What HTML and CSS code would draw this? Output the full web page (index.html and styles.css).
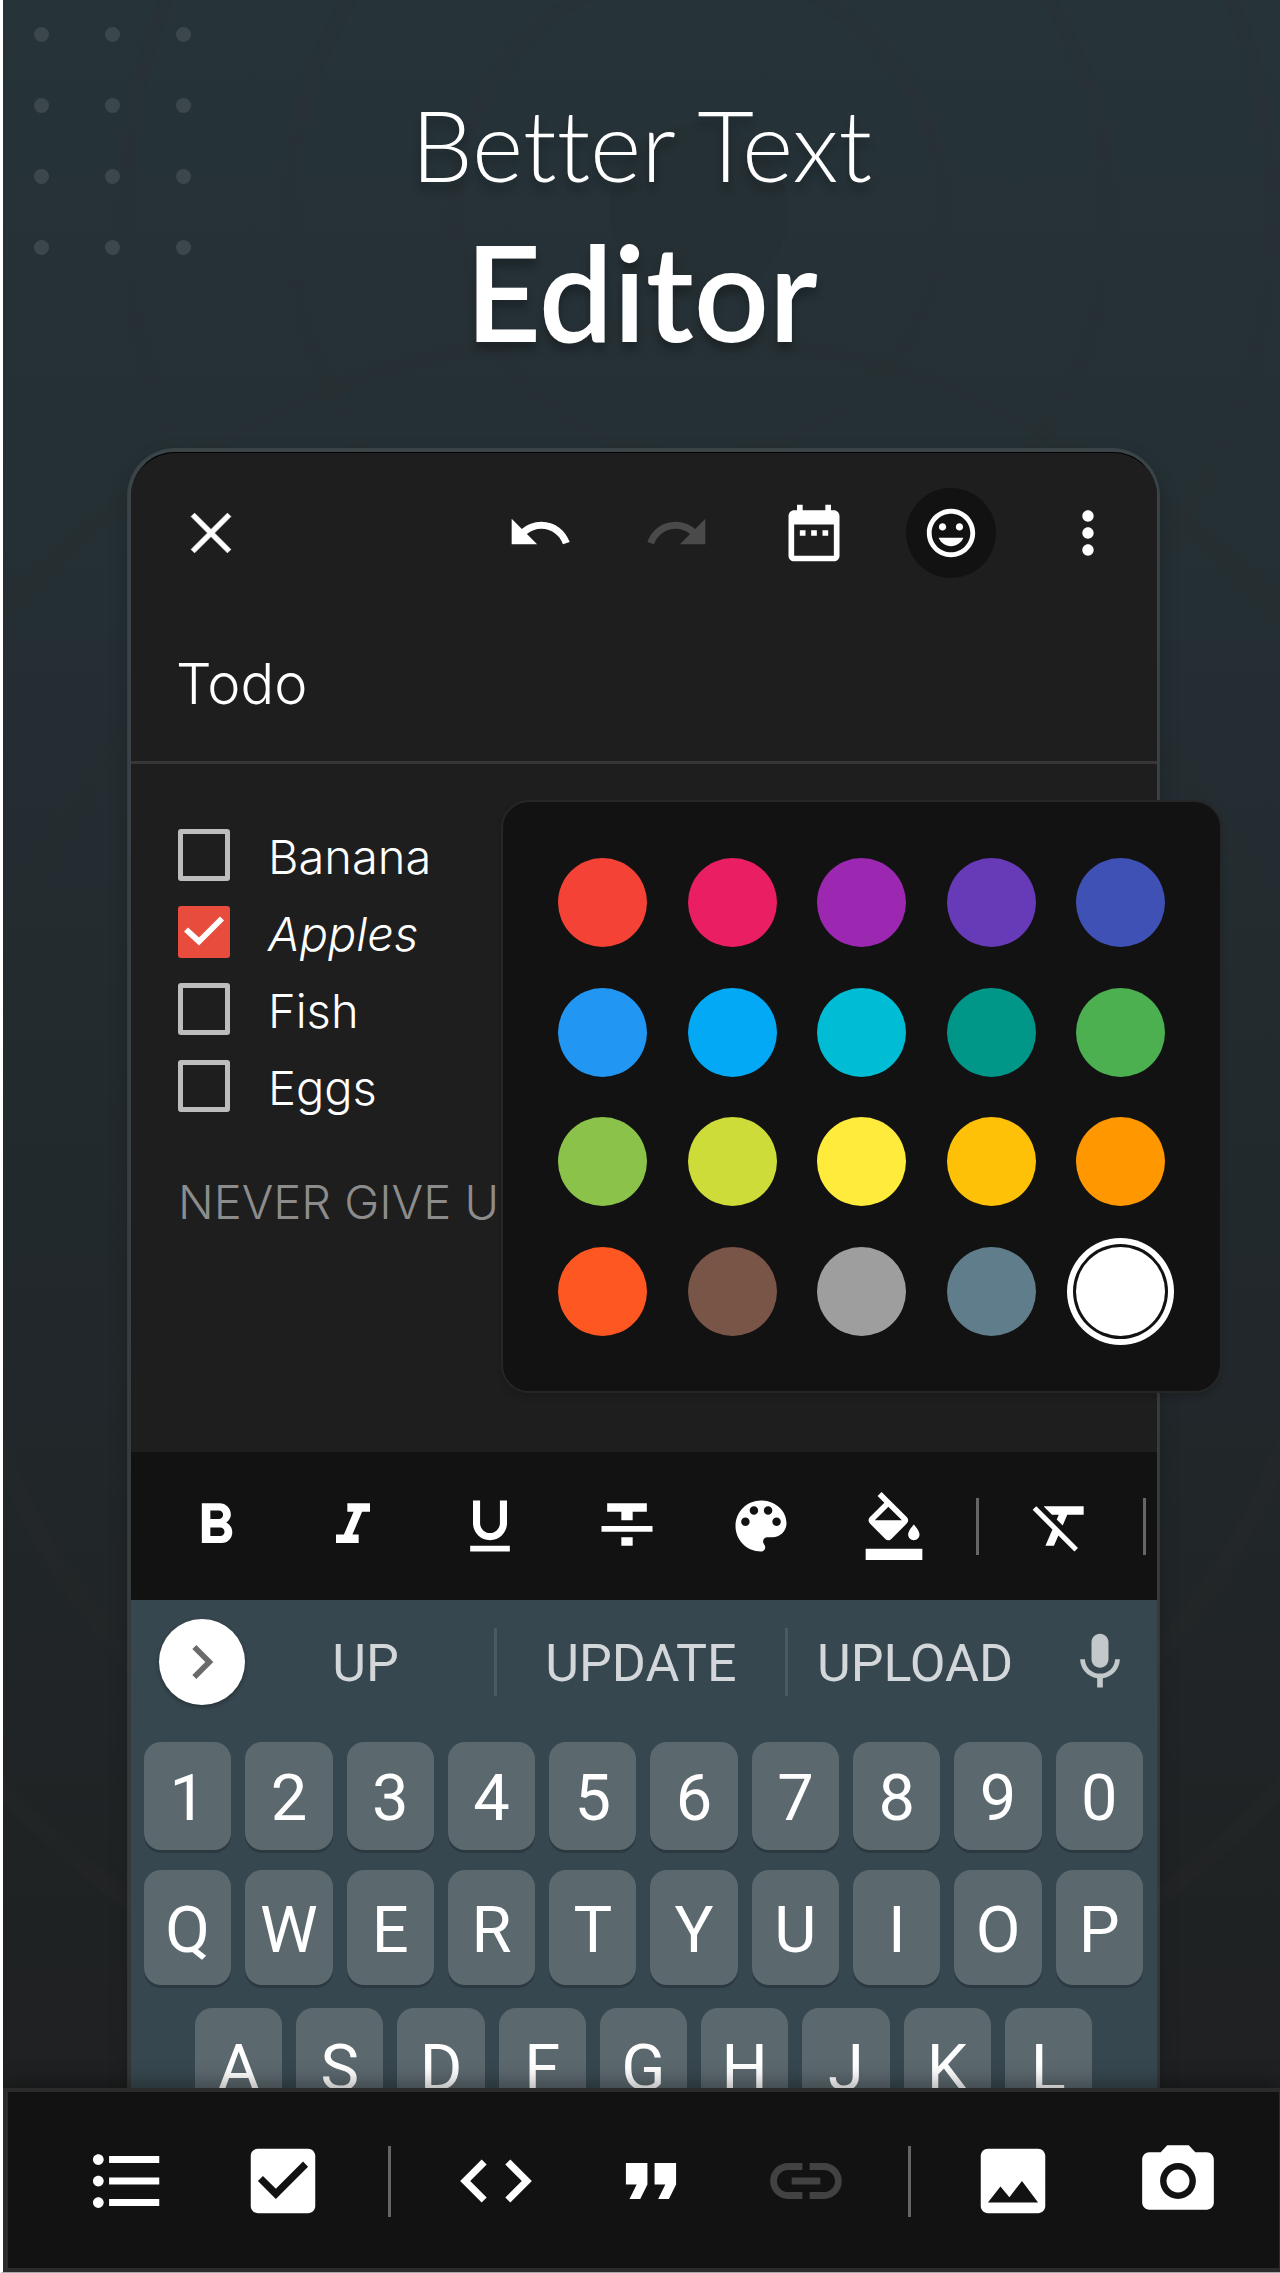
FILE: index.html
```html
<!DOCTYPE html>
<html lang="en">
<head>
<meta charset="utf-8">
<meta name="viewport" content="width=device-width, initial-scale=1">
<title>Better Text Editor</title>
<link rel="stylesheet" href="styles.css">
</head>
<body>
<main class="page">
  <div class="dots" aria-hidden="true">
    <i></i><i></i><i></i><i></i><i></i><i></i><i></i><i></i><i></i><i></i><i></i><i></i>
  </div>

  <h1 class="headline">
    <span class="headline-light">Better Text</span>
    <span class="headline-bold">Editor</span>
  </h1>

  <section class="phone">
    <header class="appbar">
      <button class="icon-btn" aria-label="Close"><svg viewBox="0 0 24 24"><path d="M19 6.200 17.800 5 12 10.800 6.200 5 5 6.200 10.800 12 5 17.800 6.200 19 12 13.200 17.800 19 19 17.800 13.200 12z" stroke="currentColor" stroke-width=".3"/></svg></button>
      <div class="appbar-actions">
        <button class="icon-btn" aria-label="Undo"><svg viewBox="0 0 24 24"><path d="M12.500 8c-2.650 0-5.050.99-6.900 2.600L2 7v9h9l-3.620-3.620c1.390-1.160 3.160-1.880 5.120-1.880 3.540 0 6.550 2.310 7.600 5.500l2.370-.78C21.080 11.030 17.150 8 12.500 8z"/></svg></button>
        <button class="icon-btn" aria-label="Redo" disabled><svg viewBox="0 0 24 24"><path d="M18.400 10.600C16.550 8.990 14.150 8 11.500 8c-4.650 0-8.580 3.030-9.960 7.220L3.900 16c1.050-3.190 4.050-5.500 7.600-5.500 1.950 0 3.730.72 5.120 1.880L13 16h9V7l-3.600 3.600z"/></svg></button>
        <button class="icon-btn" aria-label="Reminder"><svg viewBox="0 0 24 24"><path d="M9 11H7v2h2v-2zm4 0h-2v2h2v-2zm4 0h-2v2h2v-2zm2-7h-1V2h-2v2H8V2H6v2H5c-1.110 0-1.990.9-1.990 2L3 20c0 1.100.89 2 2 2h14c1.100 0 2-.9 2-2V6c0-1.100-.9-2-2-2zm0 16H5V9h14v11z"/></svg></button>
        <button class="icon-btn icon-btn-active" aria-label="Emoji"><svg viewBox="0 0 24 24"><path d="M11.990 2C6.470 2 2 6.480 2 12s4.470 10 9.990 10C17.520 22 22 17.520 22 12S17.520 2 11.990 2zM12 20c-4.420 0-8-3.580-8-8s3.580-8 8-8 8 3.580 8 8-3.580 8-8 8zm3.500-9c.83 0 1.500-.67 1.500-1.500S16.330 8 15.500 8 14 8.670 14 9.500s.67 1.500 1.500 1.500zm-7 0c.83 0 1.500-.67 1.500-1.500S9.330 8 8.500 8 7 8.670 7 9.500 7.670 11 8.500 11zm3.500 6.500c2.330 0 4.310-1.460 5.110-3.500H6.890c.8 2.040 2.780 3.500 5.110 3.500z"/></svg></button>
        <button class="icon-btn" aria-label="More"><svg viewBox="0 0 24 24"><path d="M12 8c1.100 0 2-.9 2-2s-.9-2-2-2-2 .9-2 2 .9 2 2 2zm0 2c-1.100 0-2 .9-2 2s.9 2 2 2 2-.9 2-2-.9-2-2-2zm0 6c-1.100 0-2 .9-2 2s.9 2 2 2 2-.9 2-2-.9-2-2-2z"/></svg></button>
      </div>
    </header>

    <div class="title-row"><input class="title-input" type="text" value="Todo" aria-label="Title"></div>

    <div class="note">
      <ul class="checklist">
        <li><input type="checkbox" id="banana"><label for="banana">Banana</label></li>
        <li><input type="checkbox" id="apples" checked><label for="apples"><em>Apples</em></label></li>
        <li><input type="checkbox" id="fish"><label for="fish">Fish</label></li>
        <li><input type="checkbox" id="eggs"><label for="eggs">Eggs</label></li>
      </ul>
      <p class="note-text">NEVER GIVE UP</p>

      <div class="palette" role="radiogroup" aria-label="Text colour">
        <input type="radio" name="color" aria-label="Red" style="--swatch:#f44336">
        <input type="radio" name="color" aria-label="Pink" style="--swatch:#e91e63">
        <input type="radio" name="color" aria-label="Purple" style="--swatch:#9c27b0">
        <input type="radio" name="color" aria-label="Deep purple" style="--swatch:#673ab7">
        <input type="radio" name="color" aria-label="Indigo" style="--swatch:#3f51b5">
        <input type="radio" name="color" aria-label="Blue" style="--swatch:#2196f3">
        <input type="radio" name="color" aria-label="Light blue" style="--swatch:#03a9f4">
        <input type="radio" name="color" aria-label="Cyan" style="--swatch:#00bcd4">
        <input type="radio" name="color" aria-label="Teal" style="--swatch:#009688">
        <input type="radio" name="color" aria-label="Green" style="--swatch:#4caf50">
        <input type="radio" name="color" aria-label="Light green" style="--swatch:#8bc34a">
        <input type="radio" name="color" aria-label="Lime" style="--swatch:#cddc39">
        <input type="radio" name="color" aria-label="Yellow" style="--swatch:#ffeb3b">
        <input type="radio" name="color" aria-label="Amber" style="--swatch:#ffc107">
        <input type="radio" name="color" aria-label="Orange" style="--swatch:#ff9800">
        <input type="radio" name="color" aria-label="Deep orange" style="--swatch:#ff5722">
        <input type="radio" name="color" aria-label="Brown" style="--swatch:#795548">
        <input type="radio" name="color" aria-label="Grey" style="--swatch:#9e9e9e">
        <input type="radio" name="color" aria-label="Blue grey" style="--swatch:#607d8b">
        <input type="radio" name="color" aria-label="White" style="--swatch:#ffffff" checked>
      </div>
    </div>

    <div class="format-bar">
      <div class="format-group">
        <button class="icon-btn" aria-label="Bold"><svg viewBox="0 0 24 24"><path d="M15.600 10.790c.97-.67 1.650-1.770 1.650-2.790 0-2.260-1.750-4-4-4H7v14h7.040c2.090 0 3.710-1.700 3.710-3.790 0-1.520-.86-2.820-2.150-3.420zM10 6.500h3c.83 0 1.500.67 1.500 1.500s-.67 1.500-1.500 1.500h-3v-3zm3.500 9H10v-3h3.500c.83 0 1.500.67 1.500 1.500s-.67 1.500-1.500 1.500z"/></svg></button>
        <button class="icon-btn" aria-label="Italic"><svg viewBox="0 0 24 24"><path d="M10 4v3h2.210l-3.420 8H6v3h8v-3h-2.210l3.420-8H18V4z"/></svg></button>
        <button class="icon-btn" aria-label="Underline"><svg viewBox="0 0 24 24"><path d="M12 17c3.310 0 6-2.690 6-6V3h-2.500v8c0 1.930-1.570 3.500-3.500 3.500S8.500 12.930 8.500 11V3H6v8c0 3.310 2.690 6 6 6zm-7 2v2h14v-2H5z"/></svg></button>
        <button class="icon-btn" aria-label="Strikethrough"><svg viewBox="0 0 24 24"><path d="M10 19h4v-3h-4v3zM5 4v3h5v3h4V7h5V4H5zM3 14h18v-2H3v2z"/></svg></button>
      </div>
      <div class="format-group format-group-color">
        <button class="icon-btn" aria-label="Text colour"><svg viewBox="0 0 24 24"><path d="M12 3c-4.970 0-9 4.030-9 9s4.030 9 9 9c.83 0 1.500-.67 1.500-1.500 0-.39-.15-.74-.39-1.010-.23-.26-.38-.61-.38-.99 0-.83.67-1.500 1.500-1.500H16c2.760 0 5-2.240 5-5 0-4.420-4.030-8-9-8zm-5.500 9c-.83 0-1.500-.67-1.500-1.500S5.670 9 6.500 9 8 9.670 8 10.500 7.330 12 6.500 12zm3-4C8.670 8 8 7.330 8 6.500S8.670 5 9.500 5s1.500.67 1.500 1.500S10.330 8 9.500 8zm5 0c-.83 0-1.500-.67-1.500-1.500S13.670 5 14.500 5s1.500.67 1.500 1.500S15.330 8 14.500 8zm3 4c-.83 0-1.500-.67-1.500-1.500S16.670 9 17.500 9s1.500.67 1.500 1.500-.67 1.500-1.500 1.500z"/></svg></button>
        <button class="icon-btn" aria-label="Highlight colour"><svg viewBox="0 0 24 24"><path d="M16.560 8.940L7.620 0 6.210 1.410l2.380 2.380-5.150 5.150c-.59.59-.59 1.540 0 2.120l5.500 5.500c.29.29.68.44 1.060.44s.77-.15 1.060-.44l5.500-5.500c.59-.58.59-1.530 0-2.120zM5.210 10L10 5.210 14.790 10H5.210zM19 11.500s-2 2.170-2 3.500c0 1.100.9 2 2 2s2-.9 2-2c0-1.330-2-3.500-2-3.500zM2 20h20v4H2z"/></svg></button>
      </div>
      <span class="bar-divider"></span>
      <button class="icon-btn" aria-label="Clear formatting"><svg viewBox="0 0 24 24"><path d="M3.270 5L2 6.270l6.970 6.970L6.500 19h3l1.570-3.660L16.730 21 18 19.730 3.550 5.270 3.270 5zM6 5v.18L8.820 8h2.400l-.72 1.680 2.100 2.100L14.210 8H20V5H6z"/></svg></button>
      <span class="bar-divider bar-divider-end"></span>
    </div>

    <div class="keyboard">
      <div class="suggestions">
        <button class="expand" aria-label="Expand"><svg viewBox="0 0 24 24"><path d="M8.590 16.590 13.170 12 8.590 7.410 10 6l6 6-6 6z"/></svg></button>
        <button class="suggestion">UP</button>
        <button class="suggestion">UPDATE</button>
        <button class="suggestion">UPLOAD</button>
        <button class="icon-btn mic" aria-label="Voice input"><svg viewBox="0 0 24 24"><path d="M12 14c1.660 0 2.990-1.340 2.990-3L15 5c0-1.660-1.340-3-3-3S9 3.340 9 5v6c0 1.660 1.340 3 3 3zm5.300-3c0 3-2.540 5.100-5.300 5.100S6.700 14 6.700 11H5c0 3.410 2.720 6.230 6 6.720V21h2v-3.280c3.280-.48 6-3.300 6-6.720h-1.700z"/></svg></button>
      </div>
      <div class="key-row key-row-digits">
        <button>1</button><button>2</button><button>3</button><button>4</button><button>5</button><button>6</button><button>7</button><button>8</button><button>9</button><button>0</button>
      </div>
      <div class="key-row">
        <button>Q</button><button>W</button><button>E</button><button>R</button><button>T</button><button>Y</button><button>U</button><button>I</button><button>O</button><button>P</button>
      </div>
      <div class="key-row key-row-home">
        <button>A</button><button>S</button><button>D</button><button>F</button><button>G</button><button>H</button><button>J</button><button>K</button><button>L</button>
      </div>
    </div>
  </section>

  <nav class="insert-bar" aria-label="Insert">
    <div class="insert-group insert-group-list">
      <button class="icon-btn-lg" aria-label="Bulleted list"><svg viewBox="0 0 24 24"><path d="M4 10.500c-.83 0-1.500.67-1.500 1.500s.67 1.500 1.500 1.500 1.500-.67 1.500-1.500-.67-1.500-1.500-1.500zm0-6c-.83 0-1.500.67-1.500 1.500S3.170 7.500 4 7.500 5.500 6.830 5.500 6 4.830 4.500 4 4.500zm0 12c-.83 0-1.500.68-1.500 1.500s.68 1.500 1.500 1.500 1.500-.68 1.500-1.500-.67-1.500-1.500-1.500zM7 19h14v-2H7v2zm0-6h14v-2H7v2zm0-8v2h14V5H7z"/></svg></button>
      <button class="icon-btn-lg" aria-label="Checklist"><svg viewBox="0 0 24 24"><path d="M19 3H5c-1.110 0-2 .9-2 2v14c0 1.100.89 2 2 2h14c1.110 0 2-.9 2-2V5c0-1.100-.89-2-2-2zm-9 14l-5-5 1.410-1.410L10 14.170l7.590-7.590L19 8l-9 9z"/></svg></button>
    </div>
    <span class="bar-divider"></span>
    <div class="insert-group">
      <button class="icon-btn-lg" aria-label="Code"><svg viewBox="0 0 24 24"><path d="M9.400 16.600L4.800 12l4.600-4.600L8 6l-6 6 6 6 1.400-1.400zm5.200 0l4.600-4.600-4.600-4.600L16 6l6 6-6 6-1.400-1.400z"/></svg></button>
      <button class="icon-btn-lg" aria-label="Quote"><svg viewBox="0 0 24 24"><path d="M6 17h3l2-4V7H5v6h3zm8 0h3l2-4V7h-6v6h3z"/></svg></button>
      <button class="icon-btn-lg" aria-label="Link" disabled><svg viewBox="0 0 24 24"><path d="M3.900 12c0-1.710 1.390-3.100 3.100-3.100h4V7H7c-2.760 0-5 2.240-5 5s2.240 5 5 5h4v-1.900H7c-1.710 0-3.100-1.390-3.100-3.100zM8 13h8v-2H8v2zm9-6h-4v1.900h4c1.710 0 3.100 1.390 3.100 3.100s-1.390 3.100-3.100 3.100h-4V17h4c2.760 0 5-2.240 5-5s-2.240-5-5-5z"/></svg></button>
    </div>
    <span class="bar-divider bar-divider-media"></span>
    <div class="insert-group insert-group-media">
      <button class="icon-btn-lg" aria-label="Image"><svg viewBox="0 0 24 24"><path d="M21 19V5c0-1.100-.9-2-2-2H5c-1.100 0-2 .9-2 2v14c0 1.100.9 2 2 2h14c1.100 0 2-.9 2-2zM8.500 13.500l2.500 3.010L14.500 12l4.500 6H5l3.500-4.500z"/></svg></button>
      <button class="icon-btn-lg" aria-label="Camera"><svg viewBox="0 0 24 24"><circle cx="12" cy="12" r="3.200"/><path d="M9 2L7.170 4H4c-1.100 0-2 .9-2 2v12c0 1.100.9 2 2 2h16c1.100 0 2-.9 2-2V6c0-1.100-.9-2-2-2h-3.170L15 2H9zm3 15c-2.760 0-5-2.240-5-5s2.240-5 5-5 5 2.240 5 5-2.240 5-5 5z"/></svg></button>
    </div>
  </nav>
</main>
</body>
</html>
```
FILE: styles.css
```css
* { box-sizing: border-box; }

body {
  margin: 0;
  background: #263238;
  color: #fff;
  font-family: Lato, "Liberation Sans", sans-serif;
}

button {
  padding: 0;
  border: 0;
  background: none;
  color: inherit;
  font: inherit;
}

svg {
  display: block;
  width: 100%;
  height: 100%;
  fill: currentColor;
}

.page {
  position: relative;
  display: flex;
  flex-direction: column;
  min-height: 100vh;
  overflow: hidden;
  border-left: 3px solid #fff;
  border-bottom: 1px solid #aaa;
  background:
    radial-gradient(circle at 696px 212px, #2325252e 89px, transparent 90px 236px, #2b2b2b2e 237px 252px, transparent 253px 401px, #2b2b2b2e 402px 417px, transparent 418px 565px, #2b2b2b2e 566px 581px, transparent 582px),
    radial-gradient(circle at 638px 1200px, transparent 679px, #2b2b2b2e 680px 696px, transparent 697px 859px, #2b2b2b2e 860px 876px, transparent 877px),
    linear-gradient(#263339, #253035 20%, #21272a 62%, #1e1f1f);
}

.dots {
  position: absolute;
  top: 27px;
  left: 31px;
  display: grid;
  grid-template-columns: repeat(3, 15px);
  gap: 56px;
}

.dots i {
  height: 15px;
  border-radius: 50%;
  background: #3c474c;
}

.headline {
  display: flex;
  flex-direction: column;
  gap: 15px;
  margin: 0;
  padding: 88px 0 81px;
  text-align: center;
  font-variant-ligatures: none;
  text-shadow: 0 8px 8px #00000040;
}

.headline-light {
  font-size: 98px;
  line-height: 112px;
  font-weight: 300;
}

.headline-bold {
  font-size: 132px;
  line-height: 152px;
  font-weight: 600;
}

.phone {
  margin: 0 120px 0 124px;
  border: 4px solid #ffffff1a;
  border-width: 4px 3px 0 4px;
  border-radius: 48px 48px 0 0;
  background: #1e1e1e;
  background-clip: padding-box;
  box-shadow: 0 8px 20px #00000030;
}

.icon-btn {
  flex: none;
  width: 68px;
  height: 68px;
}

.icon-btn:disabled { color: #4a4a4a; }

.appbar {
  display: flex;
  align-items: center;
  justify-content: space-between;
  height: 160px;
  padding: 0 35px 0 46px;
  border-top: 1px solid #000;
  border-radius: 44px 44px 0 0;
}

.appbar-actions {
  display: flex;
  align-items: center;
  gap: 69px;
}

.icon-btn-active {
  width: 90px;
  height: 90px;
  margin: 0 -11px;
  padding: 16px;
  border-radius: 50%;
  background: #121212;
}

.title-row {
  padding: 37px 45px 42px;
  border-bottom: 3px solid #363636;
}

.title-input {
  display: block;
  width: 100%;
  height: 70px;
  padding: 0;
  border: 0;
  background: none;
  color: #fff;
  font: 300 56px/70px Inter, "Liberation Sans", sans-serif;
}

.note {
  position: relative;
  min-height: 688px;
  padding: 52px 47px 0;
  font-family: Inter, "Liberation Sans", sans-serif;
  font-size: 47px;
  font-weight: 300;
}

.checklist {
  margin: 0;
  padding: 0;
  list-style: none;
}

.checklist li {
  display: flex;
  align-items: center;
  gap: 38px;
  height: 77px;
}

.checklist label { padding-top: 4px; }

.checklist input {
  appearance: none;
  width: 52px;
  height: 52px;
  margin: 0;
  border: 5px solid #bdbdbd;
  border-radius: 3px;
}

.checklist input:checked {
  border: 0;
  background: #e74c3c;
}

.checklist input:checked::after {
  content: "";
  display: block;
  width: 52px;
  height: 52px;
  background: #fff;
  clip-path: polygon(6px 26px, 10px 22px, 21px 32px, 42px 11px, 46px 15px, 21px 40px);
}

.note-text {
  margin: 48px 0 0;
  line-height: 60px;
  color: #8c8c8c;
}

.palette {
  position: absolute;
  top: 36px;
  right: -65px;
  display: grid;
  grid-template-columns: repeat(5, 89px);
  justify-content: space-between;
  align-content: space-between;
  width: 721px;
  height: 593px;
  padding: 56px 55px 55px;
  border: 2px solid #262626;
  border-radius: 28px;
  background: #121212;
  box-shadow: 0 4px 6px #00000026;
}

.palette input {
  appearance: none;
  width: 89px;
  height: 89px;
  margin: 0;
  border-radius: 50%;
  background: var(--swatch);
}

.palette input:checked {
  box-shadow: 0 0 0 3px #121212, 0 0 0 9px #fff;
}

.format-bar {
  display: flex;
  align-items: center;
  height: 148px;
  padding-left: 51px;
  background: #121212;
}

.format-group {
  display: flex;
  gap: 69px;
}

.format-group-color {
  gap: 65px;
  margin-left: 66px;
}

.bar-divider {
  flex: none;
  width: 3px;
  height: 57px;
  margin: 0 48px;
  background: #666;
}

.bar-divider-end { margin-right: 0; }

.keyboard {
  padding: 19px 13px 0;
  background: #37474f;
  font-family: Roboto, "Liberation Sans", sans-serif;
}

.suggestions {
  display: grid;
  grid-template-columns: 86px 249fr 291fr 281fr 68px;
  align-items: center;
  height: 86px;
  margin-bottom: 37px;
  padding: 0 10px 0 15px;
}

.expand {
  width: 86px;
  height: 86px;
  padding: 9px;
  border-radius: 50%;
  background: #fff;
  color: #6b6b6b;
  box-shadow: 0 2px 4px #00000050;
}

.suggestion {
  height: 68px;
  padding-top: 4px;
  color: #d3d7da;
  font-size: 52px;
  line-height: 64px;
}

.suggestion:nth-child(2) { padding-right: 8px; }
.suggestion:nth-child(4) { padding-right: 24px; }
.suggestion + .suggestion { border-left: 3px solid #4a5a62; }

.mic { color: #c3c8cb; }

.key-row {
  display: flex;
  gap: 14px;
  margin-bottom: 23px;
  padding-right: 1px;
}

.key-row button {
  flex: 1 1 0;
  height: 115px;
  padding-top: 5px;
  border-radius: 17px;
  background: #5b686e;
  box-shadow: 0 3px 0 #2c3940;
  font-size: 65px;
  line-height: 80px;
}

.key-row-digits { margin-bottom: 20px; }

.key-row-digits button {
  height: 108px;
  padding-top: 4px;
}

.key-row-home {
  margin-bottom: 0;
  padding: 0 52px 0 51px;
}

.insert-bar {
  position: relative;
  display: flex;
  align-items: center;
  height: 184px;
  margin-top: -35px;
  padding: 2px 0 0 76px;
  border: 4px solid #2b2b2b;
  border-width: 4px 1px 4px 5px;
  background: #121212;
  box-shadow: 0 -4px 20px #00000060;
}

.insert-bar .bar-divider {
  height: 71px;
  margin: 0 62px;
}

.insert-bar .bar-divider-media { margin: 0 59px; }

.insert-group {
  display: flex;
  gap: 69px;
}

.insert-group-list { gap: 70px; }

.insert-group-media { gap: 79px; }

.icon-btn-lg {
  flex: none;
  width: 86px;
  height: 86px;
}

.icon-btn-lg:disabled { color: #424242; }
```
